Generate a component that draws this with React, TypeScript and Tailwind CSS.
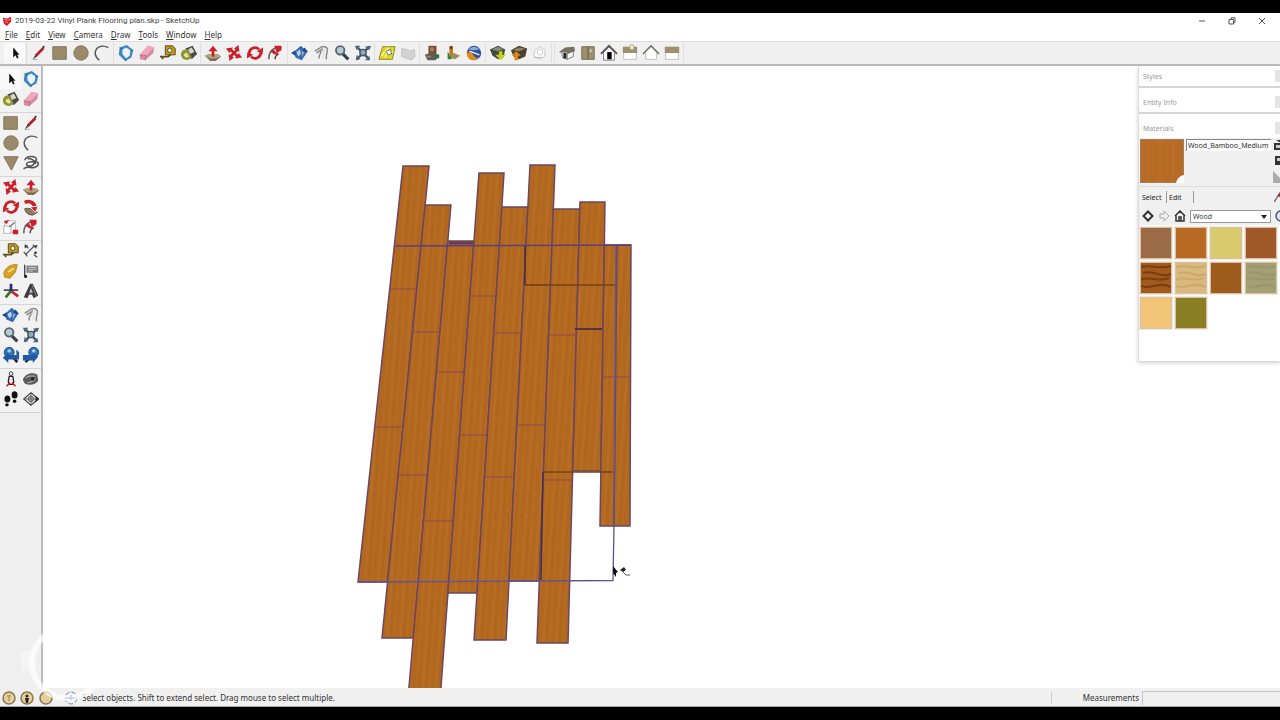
import { Fragment, type ReactNode } from "react";
import clsx from "clsx";

const red = "#c9202b";
const tan = "#9a8a69";
const ink = "#262626";

const shapes: Record<string, ReactNode> = {
  select: <path d="M8 4v11l2.6-2.4 1.6 3.6 1.8-.8-1.6-3.5H15z" fill="#111" />,
  line: (
    <>
      <path d="M3 17 6 12l2 2z" fill="#444" />
      <path d="M6.5 13 15 4.500" stroke="#b3202c" strokeWidth="3" />
      <path d="m14 4 2-1.500" stroke="#503036" strokeWidth="2" />
      <path d="M3 17h5" stroke="#999" />
    </>
  ),
  rectangle: <path d="M2 3h15v14H2z" fill={tan} stroke="#7d7055" />,
  circle: <circle cx="10" cy="10" r="8" fill={tan} stroke="#7d7055" />,
  polygon: <path d="M2 3h16l-7.500 15z" fill={tan} stroke="#7d7055" />,
  arc: <path d="M17 4C9 0 2 4 2.500 11c.3 3 2 5 4.500 7" fill="none" stroke="#555" strokeWidth="1.600" />,
  freehand: (
    <path d="M3 7c2-6 13-5 13-1 0 4-11 1-11 5 0 3 7 3 8 0 1-2 4-3 5-1 1 3-4 6-8 5-4-1-8 0-8 2M6 5c4 0 9 2 9 6" fill="none" stroke="#555" strokeWidth="1.700" />
  ),
  component: (
    <>
      <path d="m3 4 8-3 7 6-2 8-7 4-7-7z" fill="#3d86c0" />
      <path d="m6 6 4-2 5 3-1 6-4 3-4-5z" fill="#e8f3fa" />
      <path d="m3 4 3 2m9 1 3 0m-8 9v3" stroke="#1e5e96" />
    </>
  ),
  eraser: (
    <>
      <path d="m2 12 9-10 7 2-1 6-9 8-6-1z" fill="#d7899f" />
      <path d="m2 12 9-10 7 2-9 9z" fill="#eda9bb" />
      <path d="m2 12 7 1-1 5" fill="none" stroke="#b86c82" />
    </>
  ),
  tape: (
    <>
      <path d="M7 2h8l3 3v7H7z" fill="#c59b1a" stroke="#4e3f16" />
      <circle cx="12" cy="7" r="2.500" fill="#eee" stroke="#4e3f16" />
      <path d="M1 14h9l3-2M4 14v3" stroke="#5e4c1b" strokeWidth="2" fill="none" />
    </>
  ),
  paint: (
    <>
      <path d="m6 5 8-3 5 9-6 6z" fill="#4b4b45" />
      <path d="m9 6 4-2 3 5-5 2z" fill="#d6d6cc" />
      <path d="M1 12c0-5 5-7 8-5l4 8c-3 4-11 4-12-3z" fill="#8f952d" />
      <path d="M4 12c1-2 3-3 4-2l2 4c-2 2-5 1-6-2z" fill="#e2e2a8" />
    </>
  ),
  pushpull: (
    <>
      <path d="m1 13 5-2h9l4 3-6 5H7z" fill="#796c50" />
      <path d="m1 13 5-2h9l4 3-6 2H7z" fill="#b0a481" />
      <path d="M10 14V7" stroke={red} strokeWidth="3" />
      <path d="m5 8 5-6 5 6z" fill={red} />
    </>
  ),
  move: (
    <>
      <path d="m5 5 10 10M15 5 5 15" stroke={red} strokeWidth="3" />
      <path d="m1 5 8-1-4 6zM15 1l1 8-6-4zM19 15l-8 1 4-6zM5 19l-1-8 6 4z" fill={red} />
    </>
  ),
  rotate: (
    <>
      <path d="M3.500 10a6.500 6.500 0 0 1 11-4M16.500 10a6.500 6.500 0 0 1-11 4" fill="none" stroke={red} strokeWidth="3" />
      <path d="m12 8 7-4-.500 7zM8 12l-7 4 .500-7z" fill={red} />
    </>
  ),
  follow: (
    <>
      <path d="M3 12c5-2 12 1 14 4l-5 3C8 19 4 17 3 12z" fill="#8d7d60" stroke="#57482e" />
      <path d="M3 5c6-3 12 1 12 8" fill="none" stroke={red} strokeWidth="4" />
      <path d="m9 10 9-1-3 7zM3 9l7 2" fill={red} stroke="#fff" />
    </>
  ),
  scale: (
    <>
      <path d="M3 3h12v13H3z" fill="#f4f4f4" stroke="#bbb" />
      <path d="M2 9h8v8H2z" fill="#fff" stroke="#aaa" />
      <path d="m8 10 6-5" stroke="#777" strokeWidth="1.500" />
      <path d="m2 4 6-2-3 5zM12 13h6v5h-6z" fill={red} />
    </>
  ),
  offset: (
    <>
      <path d="M2 17C2 8 7 3 16 4" fill="none" stroke="#666" strokeWidth="1.800" />
      <path d="M9 17c0-3 1-5 4-6" fill="none" stroke="#444" strokeWidth="1.600" />
      <path d="M6 7 12 12" stroke={red} strokeWidth="2.500" />
      <path d="M8 2h8v5l-5 3zM3 8l5-1 1 5z" fill={red} />
    </>
  ),
  dimension: (
    <>
      <path d="M4 14 13 5M3 3l4 4M13 14l4 3M2 11l4 5M12 3l4 4" stroke="#555" strokeWidth="1.400" />
      <circle cx="15" cy="12" r="1.500" fill="#333" />
      <path d="m3 6 3-2m8 1 3-1" stroke="#444" strokeWidth="2" />
    </>
  ),
  protractor: (
    <>
      <path d="M2 12c2-6 8-10 15-9l-2 8-6 7-6-1z" fill="#d6a126" stroke="#b48a24" />
      <path d="m7 11 6-4" stroke="#f5de8c" strokeWidth="2" />
    </>
  ),
  text: (
    <>
      <path d="M5 4h13v8H5z" fill="#7d7d7d" />
      <path d="M7 6h9M7 8h9M7 10h5" stroke="#ccc" />
      <path d="M3 3v13" stroke="#444" strokeWidth="1.500" />
      <circle cx="4" cy="16" r="1.700" fill="#222" />
    </>
  ),
  axes: (
    <>
      <path d="M10 11V2" stroke="#1e2b91" strokeWidth="3" />
      <path d="m10 10 8 6" stroke={red} strokeWidth="3" />
      <path d="m10 10-6 7" stroke="#2c7a2b" strokeWidth="3" />
      <path d="m2 9 16 0" stroke="#333" strokeWidth="1.700" />
    </>
  ),
  text3d: (
    <>
      <path d="m2 17 7-15 3 0 6 13-5 3-2-4H8l-2 4z" fill="#3c3c3c" />
      <path d="m8 12 2-5 2 5z" fill="#c5c5c5" />
      <path d="m11 3 5 13" stroke="#8a8a8a" />
    </>
  ),
  orbit: (
    <>
      <path d="m3 9 8-7 7 7-6 9-7-3z" fill="#3568b0" />
      <path d="m6 9 4-3 1 5-3 3z" fill="#bcd3ed" />
      <path d="m12 6 3 3-3 6z" fill="#86aedb" />
      <path d="m0 10 5-3v6zM15 4l4 5-7-1z" fill="#23477f" />
    </>
  ),
  pan: (
    <>
      <path d="m3 8 5-3c3-3 7-3 9 0 1 3-2 6-1 12M8 16c-1-3 1-5 2-7l1-3-6 4" fill="none" stroke="#8d8d8d" strokeWidth="1.700" />
      <path d="m10 9 4-3-2 10" stroke="#d8d8d8" fill="none" />
    </>
  ),
  zoom: (
    <>
      <path d="m11 11 6 6" stroke="#33424b" strokeWidth="3.500" />
      <circle cx="8" cy="7" r="4.700" fill="#b7cbd0" stroke="#53666f" strokeWidth="2" />
    </>
  ),
  extents: (
    <>
      <path d="m3 3 14 14M17 3 3 17" stroke="#445869" strokeWidth="2.600" />
      <path d="M1 2h6L3 7zM19 2l-2 5-5-4zM18 18h-6l5-5zM2 18l1-6 4 5z" fill="#4e687c" />
      <circle cx="10" cy="9.500" r="3.500" fill="#8fadbd" stroke="#445869" strokeWidth="1.500" />
    </>
  ),
  previous: (
    <>
      <path d="m12 12 5 6" stroke="#222" strokeWidth="3" />
      <circle cx="8" cy="7" r="5.500" fill="#2e76bc" stroke="#174779" />
      <circle cx="8" cy="5.500" r="2" fill="#a9cfec" />
      <path d="M1 13l6-6v3h9V4l3 3v8H7v4z" fill="#245aa0" />
    </>
  ),
  next: (
    <>
      <path d="m9 12-5 6" stroke="#222" strokeWidth="3" />
      <circle cx="13" cy="7" r="5.500" fill="#2e76bc" stroke="#174779" />
      <circle cx="13" cy="5.500" r="2" fill="#a9cfec" />
      <path d="m18 12-6-5v3H1v6h11v3z" fill="#245aa0" />
    </>
  ),
  camera: (
    <>
      <circle cx="10" cy="4" r="2" fill="#fff" stroke="#222" />
      <path d="M8 7h4l1 6-1 3H8l-1-3z" fill="#eee" stroke="#222" strokeWidth="1.500" />
      <path d="m5 18 4-4m6 4-4-4" stroke={red} strokeWidth="1.700" />
    </>
  ),
  look: (
    <>
      <path d="M1 11c2-7 10-9 16-6l1 7c-3 4-9 6-15 3z" fill="#5b5b5b" />
      <path d="M4 9c3-3 6-3 11-2M6 14c3 0 6-1 9-4" stroke="#aaa" strokeWidth="1.300" fill="none" />
      <circle cx="12" cy="10" r="2" fill="#222" />
    </>
  ),
  walk: (
    <>
      <ellipse cx="6" cy="10" rx="3.300" ry="4" fill="#111" />
      <ellipse cx="5.500" cy="16.500" rx="2" ry="1.700" fill="#111" />
      <ellipse cx="14" cy="5.500" rx="3.300" ry="4" fill="#111" />
      <ellipse cx="14" cy="12.500" rx="2" ry="2" fill="#111" />
    </>
  ),
  section: (
    <>
      <path d="m2 10 8-7 8 7-8 7z" fill="#f3f3f3" stroke="#444" strokeWidth="1.300" />
      <circle cx="10" cy="10" r="3" fill="#ccc" stroke="#444" />
      <path d="M10 3v14M2 10h16" stroke="#555" />
      <path d="m15 6 4 4-4 4z" fill="#222" />
    </>
  ),
  location: (
    <>
      <path d="M5 3h14l-3 14H1z" fill="#e1d722" stroke="#82821f" />
      <path d="m4 13 8-9M8 15l3-7 6 1" stroke="#fff9a5" strokeWidth="1.500" fill="none" />
      <path d="m9 8 5-2 1 5-4 1z" fill="#fff" stroke="#666" />
    </>
  ),
  terrain: (
    <path d="m3 5 6 1 3 2 5-2 1 8-4 4-11-4z" fill="#d2d2d2" stroke="#c4c4c4" />
  ),
  photo: (
    <>
      <path d="M6 2h9v11H6z" fill="#7d4d34" />
      <path d="m2 12 6-2 10 2-4 6H5z" fill="#5d5e59" />
      <path d="M8 4h4v4H8zM4 13h5v2H4z" fill="#a98058" />
      <path d="M13 12h5v4h-5z" fill="#2e7440" />
    </>
  ),
  shadow: (
    <>
      <path d="M6 3h4v10H6z" fill="#cf7618" />
      <path d="m4 14 7-4 7 3-6 4z" fill="#a08d55" />
      <path d="M4 8v9h5z" fill="#39813e" />
      <circle cx="8" cy="4" r="2" fill="#6b4d24" />
    </>
  ),
  earth: (
    <>
      <circle cx="10" cy="10" r="8" fill="#2b4f9b" />
      <path d="M4 6c4-4 8-4 12 0l-6 1z" fill="#8aa9dc" />
      <path d="M2 10c3-2 5-1 7 2s3 4 6 3c-4 5-13 4-13-5z" fill="#e28a1b" />
      <path d="m5 8 11 4" stroke="#f2f3ed" strokeWidth="1.500" />
    </>
  ),
  warehouse: (
    <>
      <path d="m1 6 9-4 8 4-2 9-6 2-6-4z" fill="#3f4a3e" />
      <path d="m3 6 7-3 6 3-6 2z" fill="#8a8a7a" />
      <path d="M11 8h4v4h4l-6 6-6-6h4z" fill="#c0d01a" />
    </>
  ),
  share: (
    <>
      <path d="m1 7 9-5 9 3-2 9-7 3-6-3z" fill="#4c4032" />
      <path d="m3 7 7-3 7 1-6 3z" fill="#928064" />
      <path d="M5 18v-5H2l5-5 5 5H9v5z" fill="#e28716" />
    </>
  ),
  extension: (
    <>
      <path d="m4 7 6-4 6 4-1 7-6 3-6-4z" fill="#f8f8f8" stroke="#c4c4c4" />
      <circle cx="10" cy="9" r="3" fill="#fff" stroke="#ccc" />
      <path d="M3 15h9" stroke="#bbb" />
    </>
  ),
  iso: (
    <>
      <path d="m1 9 7-5 10-1 1 5-9 3z" fill="#796f5b" />
      <path d="M4 9h6v8l-5-2zM10 11l7-3v6l-7 3z" fill="#f4f4f4" stroke="#777" />
      <path d="M6 10h3v6H6z" fill="#222" />
    </>
  ),
  top: (
    <>
      <path d="M3 3h14v14H3z" fill="#9c906f" stroke="#766b51" />
      <path d="M10 3v14" stroke="#605640" />
      <path d="M12 6h2v3h-2z" fill="#ddd6bd" />
    </>
  ),
  front: (
    <>
      <path d="M4 9v9h12V9l-6-6z" fill="#fff" stroke="#777" />
      <path d="m1 11 9-9 9 9" stroke="#595448" strokeWidth="2" fill="none" />
      <path d="M8 9h5v8H8z" fill="#000" />
    </>
  ),
  right: (
    <>
      <path d="M3 4h14v13H3z" fill="#fff" stroke="#bbb" />
      <path d="M2 3h16v7H2z" fill="#9c906f" />
      <path d="M10 1h4v5h-4z" fill="#f1f1e6" stroke="#b5ab8e" />
    </>
  ),
  back: (
    <>
      <path d="M4 9v8h12V9l-6-6z" fill="#fff" stroke="#bbb" />
      <path d="m1 11 9-9 9 9" stroke="#757062" strokeWidth="1.600" fill="none" />
    </>
  ),
  left: (
    <>
      <path d="M3 4h14v13H3z" fill="#fff" stroke="#bbb" />
      <path d="M2 3h16v7H2z" fill="#9c906f" />
    </>
  ),
};

function Icon({ name }: { name: string }) {
  return (
    <svg viewBox="0 0 20 20" className="size-[18px] shrink-0" aria-hidden="true">
      {shapes[name]}
    </svg>
  );
}

const menus = ["File", "Edit", "View", "Camera", "Draw", "Tools", "Window", "Help"];

const toolbar = [
  ["line", "rectangle", "circle", "arc"],
  ["component", "eraser", "tape", "paint"],
  ["pushpull", "move", "rotate", "offset"],
  ["orbit", "pan", "zoom", "extents"],
  ["location", "terrain"],
  ["photo", "shadow", "earth"],
  ["warehouse", "share", "extension"],
];

const views = ["iso", "top", "front", "right", "back", "left"];

const palette = [
  ["select", "component", "paint", "eraser"],
  ["rectangle", "line", "circle", "arc", "polygon", "freehand"],
  ["move", "pushpull", "rotate", "follow", "scale", "offset"],
  ["tape", "dimension", "protractor", "text", "axes", "text3d"],
  ["orbit", "pan", "zoom", "extents", "previous", "next"],
  ["camera", "look", "walk", "section"],
];

function ToolButton({ name, active }: { name: string; active?: boolean }) {
  return (
    <button
      type="button"
      aria-label={name}
      className={clsx("flex h-5 w-[21px] items-center justify-center", active && "bg-[#f9f9f9]")}
    >
      <Icon name={name} />
    </button>
  );
}

function TitleBar() {
  return (
    <header className="flex h-4 items-center bg-white pl-0.5">
      <svg viewBox="0 0 12 12" className="size-[10px]" aria-hidden="true">
        <path d="m1 2 5 1 5-2v6l-5 5-4-3z" fill="#d5212e" />
        <path d="m3 4 4 1 3-1M4 7l3 1" stroke="#f5a3a8" fill="none" />
      </svg>
      <h1 className="ml-[3px] font-['Roboto',sans-serif] text-[8px] text-[#444]">
        2019-03-22 Vinyl Plank Flooring plan.skp - SketchUp
      </h1>
      <div className="ml-auto flex pr-[3px] text-[#555]">
        <button type="button" aria-label="Minimize" className="flex w-[30px] justify-center">
          <svg viewBox="0 0 8 8" className="size-2"><path d="M1 4h6" stroke="currentColor" /></svg>
        </button>
        <button type="button" aria-label="Restore" className="flex w-[30px] justify-center">
          <svg viewBox="0 0 8 8" className="size-2" fill="none" stroke="currentColor">
            <path d="M1 2.500h4.500V7H1zM3 2V.800h4V5.500H6" />
          </svg>
        </button>
        <button type="button" aria-label="Close" className="flex w-[30px] justify-center">
          <svg viewBox="0 0 8 8" className="size-2"><path d="m1 1 6 6M7 1 1 7" stroke="currentColor" /></svg>
        </button>
      </div>
    </header>
  );
}

function MenuBar() {
  return (
    <nav className="flex h-3 items-center gap-2 bg-white pl-[5px] text-[8px] text-[#333]">
      {menus.map((menu) => (
        <button key={menu} type="button">
          <span className="underline">{menu[0]}</span>
          {menu.slice(1)}
        </button>
      ))}
    </nav>
  );
}

function Toolbar() {
  return (
    <div className="flex h-[25px] items-center border-t border-b-2 border-t-[#dedede] border-b-[#b9b9b9] bg-[#f0f0f0] pl-1">
      <ToolButton name="select" active />
      <i className="mx-px h-5 w-px bg-[#dcdcdc]" />
      {toolbar.map((group) => (
        <Fragment key={group[0]}>
          {group.map((name) => (
            <ToolButton key={name} name={name} />
          ))}
          <i className="mx-px h-5 w-px bg-[#dfdfdf]" />
        </Fragment>
      ))}
      <i className="mx-px h-5 w-px bg-[#dfdfdf]" />
      {views.map((name) => (
        <ToolButton key={name} name={name} />
      ))}
      <i className="mx-px h-5 w-px bg-[#dfdfdf]" />
    </div>
  );
}

function Palette() {
  return (
    <aside className="w-[43px] shrink-0 border-r-2 border-[#bcbcbc] bg-[#eeefee]">
      <div className="border-b border-[#d0d0d0] bg-[#f2f2f2] pt-[3px]">
        {palette.map((group, i) => (
          <div
            key={i}
            className="grid grid-cols-2 border-b border-[#d6d6d6] pb-[3px] last:border-b-0"
          >
            {group.map((name) => (
              <ToolButton key={name} name={name} active={name === "select"} />
            ))}
          </div>
        ))}
      </div>
    </aside>
  );
}

// Long plank edges, each as [x1, y1, x2, y2]
const edges = [
  [403, 166, 358, 582],
  [429, 166, 382, 638],
  [451, 204, 409, 687],
  [479, 173, 441, 687],
  [504, 173, 474, 640],
  [530, 165, 506, 640],
  [555, 165, 537, 643],
  [580, 201, 568, 643],
  [605, 201, 600, 526],
  [617, 245, 614, 526],
  [631, 245, 630, 526],
];

const planks = [
  { top: 166, bottom: 582, seams: [289, 427] },
  { top: 205, bottom: 638, seams: [332, 475] },
  { top: 241, bottom: 690, seams: [372, 521] },
  { top: 173, bottom: 593, seams: [296, 435] },
  { top: 207, bottom: 640, seams: [333, 477] },
  { top: 165, bottom: 581, seams: [285, 425] },
  { top: 209, bottom: 643, seams: [335, 480] },
  { top: 202, bottom: 471, seams: [] },
  { top: 245, bottom: 526, seams: [377] },
  { top: 245, bottom: 526, seams: [377] },
];

function edgeX(index: number, y: number) {
  const [x1, y1, x2, y2] = edges[index];
  return x1 + ((x2 - x1) * (y - y1)) / (y2 - y1);
}

function FloorModel() {
  return (
    <svg className="block h-full w-full" role="img" aria-label="Plank layout">
      <defs>
        <pattern id="grain" width="13" height="44" patternUnits="userSpaceOnUse" patternTransform="skewX(-4)">
          <path d="M0 0h13v44H0z" fill="#b2691f" />
          <path d="M2 0h2v44H2zM9 0h1v44H9z" fill="#b86e25" />
          <path d="M6 0h1v44H6z" fill="#ae641c" />
          <path d="M4 10h2v2H4zM10 31h2v2h-2z" fill="#aa601b" />
        </pattern>
      </defs>
      <g transform="translate(-43 -66)">
        {planks.map(({ top, bottom, seams }, i) => (
          <g key={i}>
            <path
              d={`M${edgeX(i, top)} ${top}H${edgeX(i + 1, top)}L${edgeX(i + 1, bottom)} ${bottom}H${edgeX(i, bottom)}Z`}
              fill="url(#grain)"
              stroke="#6d4560"
              strokeWidth="1.500"
            />
            {seams.map((y) => (
              <path key={y} d={`M${edgeX(i, y)} ${y}H${edgeX(i + 1, y)}`} stroke="#8f4953" />
            ))}
          </g>
        ))}
        <path d="M449 243h25" stroke="#6b3d50" strokeWidth="3" />
        <path d="M525 246v39" stroke="#4a2c3a" strokeWidth="1.500" />
        <path d="M525 285h91" stroke="#75420f" strokeWidth="1.300" />
        <path d="M575 329h27" stroke="#3a2345" strokeWidth="1.500" />
        <path d="M544 472h69" stroke="#7b4216" strokeWidth="1.300" />
        <path d="M543 472 541 580" stroke="#47304f" strokeWidth="1.500" />
        <path d="M395 246 631 245" stroke="#5b4080" strokeWidth="1.700" />
        <path d="M358 582 613 580.500 614 526 616 245" fill="none" stroke="#5b5499" strokeWidth="1.300" />
        <path d="m613 566 5 6-2 1v4l-3-4z" fill="#111" />
        <path d="m620 570 4-3 2 3-3 2z" fill="#222" />
        <path d="m623 572 3 3h4" fill="none" stroke="#555" />
      </g>
    </svg>
  );
}

const swatches = [
  { name: "Wood Ash", color: "bg-[#9b6b45]" },
  { name: "Wood Bamboo", color: "bg-[#b86a25]" },
  { name: "Wood Birch", color: "bg-[#d9cb6e]" },
  { name: "Wood Cherry", color: "bg-[#a0572a]" },
  { name: "Wood Burl", color: "bg-[#a05a1b]", grain: "#7a3c10" },
  { name: "Wood Maple", color: "bg-[#d9b97d]", grain: "#cda96c" },
  { name: "Wood Oak", color: "bg-[#9d5c1c]" },
  { name: "Wood Weathered", color: "bg-[#a3a173]", grain: "#999769" },
  { name: "Wood Pine", color: "bg-[#f2c477]" },
  { name: "Wood Olive", color: "bg-[#8a7e25]" },
];

function PanelHeading({ title }: { title: string }) {
  return (
    <h2 className="flex h-5 items-center justify-between bg-white pl-1 text-[7px] text-[#999]">
      {title}
      <span className="h-3 w-[5px] bg-[#e4e4e4]" />
    </h2>
  );
}

function Tray() {
  return (
    <aside className="absolute top-0 right-0 w-[142px] border-l border-[#dcdcdc] bg-white shadow-[0_2px_4px_#0003]">
      <div className="border-b-2 border-[#d6d6d6]">
        <PanelHeading title="Styles" />
      </div>
      <div className="mt-1 border-b-2 border-[#d6d6d6]">
        <PanelHeading title="Entity Info" />
      </div>
      <div className="mt-1">
        <PanelHeading title="Materials" />
      </div>
      <div className="flex h-12 gap-0.5 overflow-hidden bg-[#f0f0f0] pt-px pl-px">
        <svg viewBox="0 0 44 44" className="size-11 shrink-0" aria-hidden="true">
          <path d="M0 0h44v44H0z" fill="#b76b25" stroke="#a0815f" strokeWidth="2" />
          <path d="M8 2v40M20 2v40M33 2v40" stroke="#bb6f29" strokeWidth="2" />
          <path d="M44 36c-5 1-7 4-8 8h8z" fill="#fff" />
        </svg>
        <input
          aria-label="Material name"
          defaultValue="Wood_Bamboo_Medium"
          className="h-3 w-[85px] min-w-0 shrink-0 border-t border-l border-[#888] bg-[#fbfbfb] px-px text-[7px] text-[#333]"
        />
        <svg viewBox="0 0 8 46" className="ml-auto h-[46px] w-2 shrink-0" aria-hidden="true">
          <path d="M1 4h7v7H1zM3 1h5v3M2 17h6v9H2zM4 14h4" fill="#333" />
          <path d="M3 6h5v3H3zM4 19h4v3H4z" fill="#ccc" />
          <path d="m0 32 8 8v4H0z" fill="#aaa" />
        </svg>
      </div>
      <div className="border-t border-[#ddd] bg-[#f0f0f0]">
        <div className="flex h-5 items-center pl-[3px] text-[7px] text-[#222]" role="tablist">
          <button type="button" role="tab" aria-selected="true" className="w-6 text-left">Select</button>
          <button type="button" role="tab" aria-selected="false" className="h-3 w-[28px] border-x border-[#999] pl-0.5 text-left">
            Edit
          </button>
          <svg viewBox="0 0 6 12" className="ml-auto h-3 w-1.5" aria-hidden="true">
            <path d="m0 11 4-6" stroke="#777" strokeWidth="1.500" />
            <path d="m3 5 3-4v5z" fill="#a3272f" />
          </svg>
        </div>
        <div className="flex h-[18px] items-center gap-1 pl-[3px] text-[#333]">
          <button type="button" aria-label="Back">
            <svg viewBox="0 0 12 12" className="size-3" fill="none" stroke="currentColor" strokeWidth="2">
              <path d="M6 1.500 1.500 6 6 10.500 10.500 6z" />
            </svg>
          </button>
          <button type="button" aria-label="Forward" className="text-[#aaa]">
            <svg viewBox="0 0 12 12" className="size-3" fill="none" stroke="currentColor">
              <path d="M6 1v3H2v4h4v3l5-5z" />
            </svg>
          </button>
          <button type="button" aria-label="In model">
            <svg viewBox="0 0 12 12" className="size-3" fill="none" stroke="currentColor" strokeWidth="1.500">
              <path d="m1 6 5-5 5 5M2 5v6h8V5M5 11V7h2v4" />
            </svg>
          </button>
          <div className="relative flex shrink-0">
            <select
              aria-label="Collection"
              className="h-[13px] w-[81px] appearance-none border border-[#999] bg-white pl-0.5 text-[7px] text-[#333]"
            >
              <option>Wood</option>
            </select>
            <svg viewBox="0 0 6 6" className="pointer-events-none absolute top-1 right-1 size-1.5" aria-hidden="true">
              <path d="M0 1h6L3 5z" fill="#222" />
            </svg>
          </div>
          <svg viewBox="0 0 6 12" className="ml-auto h-3 w-1.5 shrink-0" aria-hidden="true">
            <path d="M6 1a5 5 0 0 0 0 10" fill="#dce4f2" stroke="#556" strokeWidth="1.500" />
          </svg>
        </div>
      </div>
      <div className="grid grid-cols-4 gap-[3px] pt-0.5 pr-[3px] pb-8 pl-px">
        {swatches.map(({ name, color, grain }) => (
          <button
            key={name}
            type="button"
            aria-label={name}
            className={clsx("h-8 border border-[#d8c3aa] outline outline-[#f6e8db]", color)}
          >
            {grain && (
              <svg viewBox="0 0 30 30" className="size-full" fill="none" stroke={grain} aria-hidden="true">
                <path d="M0 4c10-3 18 3 30-1M2 10c12-4 18 6 28 1M0 17c6-5 20 3 28-2M0 23c9 4 18-5 30 1" strokeWidth="2" />
              </svg>
            )}
          </button>
        ))}
      </div>
    </aside>
  );
}

function StatusBar() {
  return (
    <footer className="flex h-[19px] items-center border-b border-[#aaa] bg-[#f0f0f0] pt-0.5 text-[8px] text-[#333]">
      <svg viewBox="0 0 82 16" className="h-4 w-[82px] shrink-0" aria-hidden="true">
        <g fill="#e7cf9d" stroke="#8c7650" strokeWidth="1.500">
          <circle cx="9" cy="8" r="6" />
          <circle cx="27" cy="8" r="6" />
          <circle cx="46" cy="8" r="6" />
        </g>
        <path d="M9 5v6M7 6h4" stroke="#b39a6a" strokeWidth="1.500" />
        <circle cx="27" cy="6" r="1.500" fill={ink} />
        <path d="M25 8h4l-1 5h-2z" fill={ink} />
        <circle cx="71" cy="8" r="6" fill="#eef2f6" stroke="#7d8791" strokeDasharray="5 2" />
        <path d="M66 8h9M71 5v5" stroke="#39587d" strokeWidth="1.500" />
      </svg>
      <p>Select objects. Shift to extend select. Drag mouse to select multiple.</p>
      <i className="ml-auto h-3 w-px bg-[#ccc]" />
      <label htmlFor="measurements" className="ml-[31px]">Measurements</label>
      <input id="measurements" className="ml-[3px] h-[14px] w-[138px] border-t border-l border-[#c4c4c4] bg-[#f0f0f0]" />
    </footer>
  );
}

export default function App() {
  return (
    <div className="relative flex h-screen flex-col overflow-hidden border-t-[13px] border-b-[13px] border-black bg-white font-['Noto_Sans','Open_Sans',sans-serif] leading-none">
      <TitleBar />
      <MenuBar />
      <Toolbar />
      <main className="flex min-h-0 flex-1">
        <Palette />
        <section className="relative min-w-0 flex-1 overflow-hidden bg-[#fefffe]">
          <FloorModel />
          <Tray />
        </section>
      </main>
      <StatusBar />
      {/* recorder watermark */}
      <svg viewBox="0 0 90 90" className="pointer-events-none absolute bottom-0 left-[18px] size-[90px]" aria-hidden="true">
        <circle cx="49" cy="46" r="35" fill="none" stroke="#fff" strokeWidth="6" opacity=".7" />
        <path d="M3 34h13v20H3z" fill="#fff" opacity=".3" />
      </svg>
    </div>
  );
}
